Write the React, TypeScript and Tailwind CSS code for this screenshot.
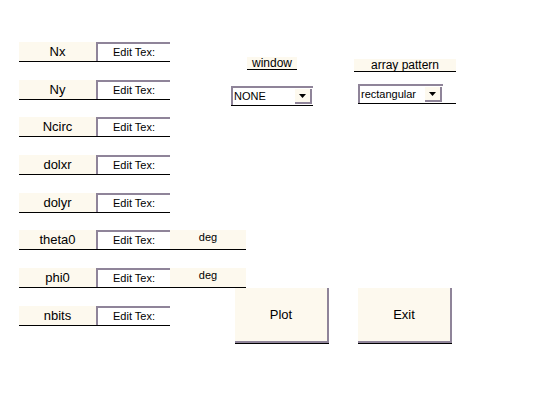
const fields = [
  { label: 'Nx' },
  { label: 'Ny' },
  { label: 'Ncirc' },
  { label: 'dolxr' },
  { label: 'dolyr' },
  { label: 'theta0', unit: 'deg' },
  { label: 'phi0', unit: 'deg' },
  { label: 'nbits' },
]

function EditBox() {
  return (
    <div className="w-[74px] h-[19px] bg-white border-t-2 border-l-2 border-[#8f8499] flex items-center justify-center text-[11px] leading-none text-black">
      Edit Tex:
    </div>
  )
}

function FieldRow(props: { label: string; unit?: string }) {
  return (
    <div className="flex flex-col items-start">
      <div className="flex h-[19px]">
        <div className="w-[77px] bg-[#fdf9ee] flex items-center justify-center text-[13px] leading-none">
          {props.label}
        </div>
        <EditBox />
        {props.unit && (
          <div className="w-[76px] bg-[#fdf9ee] flex items-start justify-center text-[11px] leading-[14px]">
            {props.unit}
          </div>
        )}
      </div>
      <div className={props.unit ? 'w-[227px] h-px bg-black' : 'w-[151px] h-px bg-black'} />
    </div>
  )
}

function Dropdown(props: { value: string; width: string }) {
  return (
    <div className="flex flex-col">
      <div
        className={`${props.width} h-[19px] bg-white border-t-2 border-l-2 border-[#8f8499] flex items-center justify-between`}
      >
        <span className="pl-[1px] text-[11px] leading-none">{props.value}</span>
        <div className="w-[17px] h-[15px] mr-[1px] bg-[#fdf9ee] border-r-2 border-b-2 border-[#8f8499] flex items-center justify-center">
          <svg width="7" height="4" viewBox="0 0 7 4">
            <path d="M0 0h7L3.5 4z" fill="black" />
          </svg>
        </div>
      </div>
      <div className="h-px bg-black" />
    </div>
  )
}

function Button(props: { label: string }) {
  return (
    <div className="flex flex-col">
      <div className="w-[94px] h-[55px] bg-[#fdf9ee] border-r-2 border-b-2 border-[#8f8499] flex items-center justify-center text-[13px]">
        {props.label}
      </div>
      <div className="h-px bg-black" />
    </div>
  )
}

export default function App() {
  return (
    <div className="w-[560px] h-[420px] bg-white text-black font-['Liberation_Sans',Arial,sans-serif] grid">
      <div className="col-start-1 row-start-1 pl-[19px] pt-[42px] flex flex-col gap-[17.7px]">
        {fields.map((f) => (
          <FieldRow key={f.label} label={f.label} unit={f.unit} />
        ))}
      </div>

      <div className="col-start-1 row-start-1 pl-[231px] pt-[57px] flex flex-col">
        <div className="flex items-start">
          <div className="w-[82px] flex flex-col items-center">
            <div className="w-[50px] h-[13px] bg-[#fdf9ee] border-b border-black flex items-end justify-center text-[12px] leading-none pb-[0px]">
              window
            </div>
            <div className="mt-[16px] w-full">
              <Dropdown value="NONE" width="w-[82px]" />
            </div>
          </div>
          <div className="ml-[41px] pt-[2px] w-[102px] flex flex-col">
            <div className="w-[102px] h-[13px] bg-[#fdf9ee] border-b border-black flex items-end justify-center text-[12px] leading-none">
              array pattern
            </div>
            <div className="mt-[12px] ml-[4px]">
              <Dropdown value="rectangular" width="w-[85px]" />
            </div>
          </div>
        </div>

        <div className="mt-[182px] ml-[4px] flex gap-[29px]">
          <Button label="Plot" />
          <Button label="Exit" />
        </div>
      </div>
    </div>
  )
}
